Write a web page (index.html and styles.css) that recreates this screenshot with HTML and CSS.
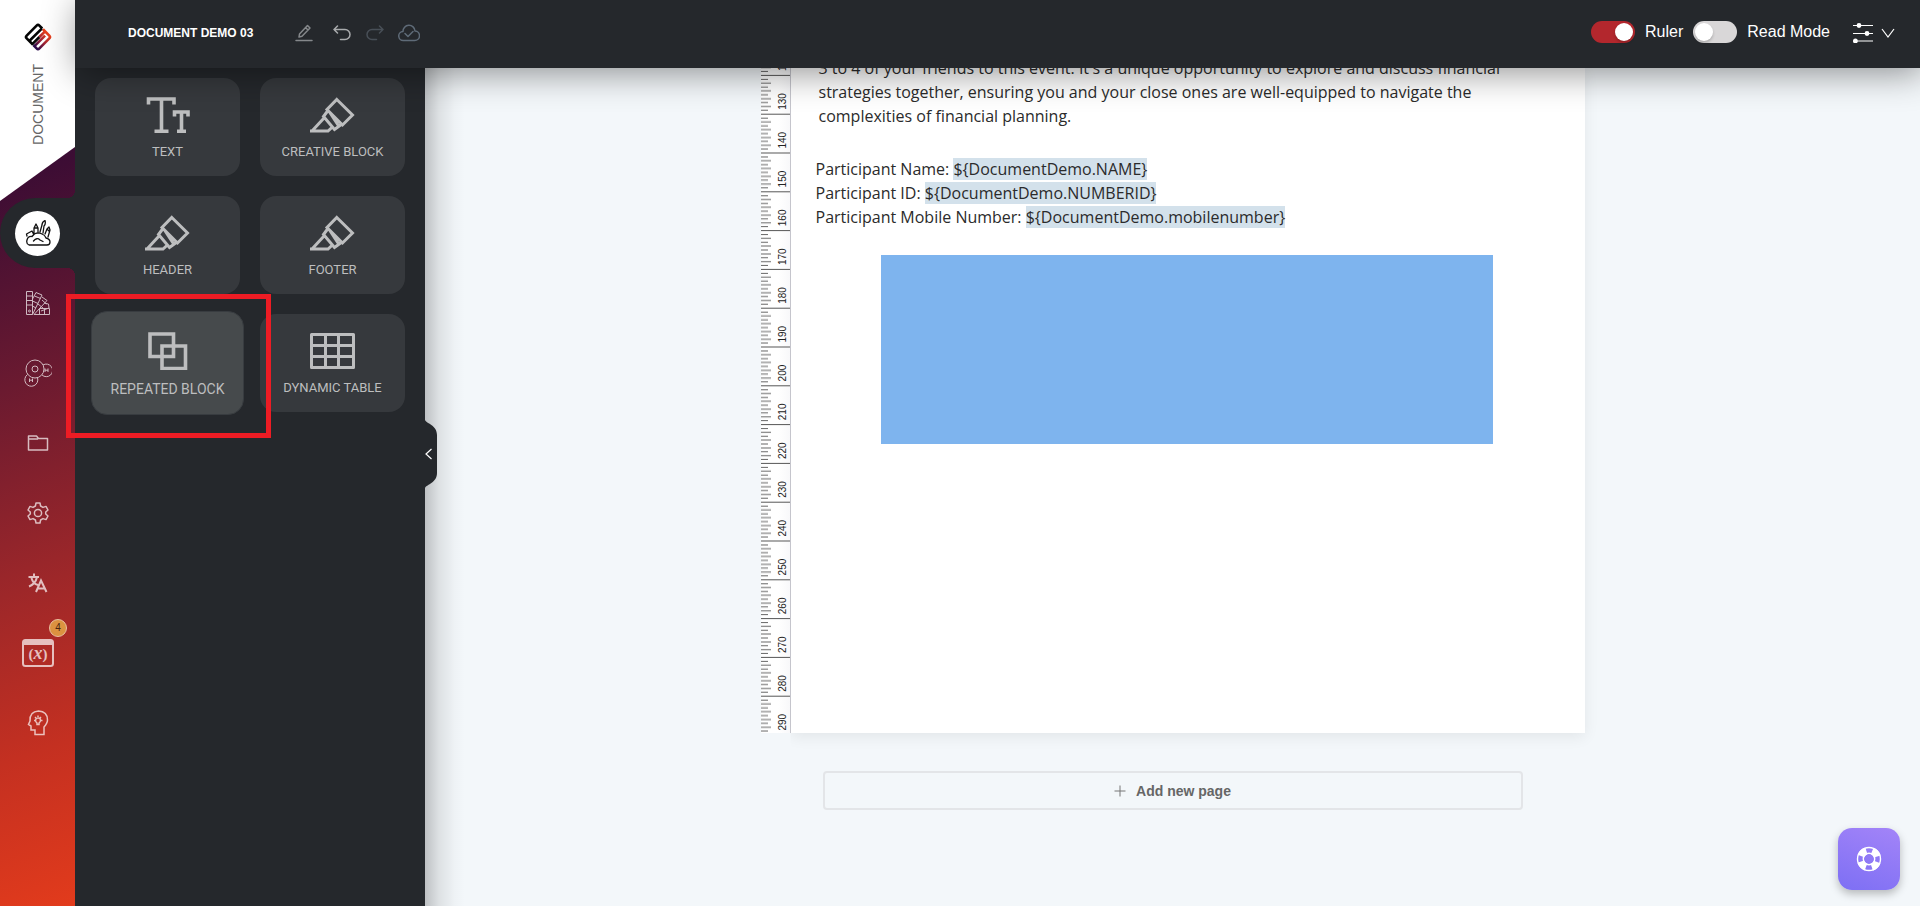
FILE: index.html
```html
<!DOCTYPE html>
<html lang="en">
<head>
<meta charset="utf-8">
<title>Document Demo 03</title>
<link rel="stylesheet" href="styles.css">
</head>
<body>
<svg class="defs" aria-hidden="true">
  <symbol id="marker" viewBox="0 0 45 36">
    <path d="M26.800 2.500 L42.500 18 L32.500 28 L17 12.500 Z M18 13.500 L13.500 19.500 L24.500 32.500 L32 27 M19.500 15 L29 29.500 M14.500 20.500 L2 34 M0 34 H18 L23.500 29" fill="none" stroke="currentColor" stroke-width="3"/>
  </symbol>
</svg>
<div class="app">
  <nav class="rail" aria-label="Document">
    <div class="brand">
      <svg class="logo" viewBox="0 0 30 30" width="30" height="30">
        <defs><linearGradient id="lg" x1="0" y1="0" x2="1" y2="0"><stop offset="0" stop-color="#2a0a4a"/><stop offset=".5" stop-color="#a02335"/><stop offset="1" stop-color="#e8401c"/></linearGradient></defs>
        <g transform="translate(15 15) rotate(-45)" fill="none" stroke-width="2.600" stroke-linejoin="round">
          <path d="M9 -3 V-7 Q9 -9 7 -9 H-7 Q-9 -9 -9 -7 V2" stroke="#050505"/>
          <path d="M-9 -3.300 H9 M-9 1 H1" stroke="#050505"/>
          <path d="M9 -2 V7 Q9 9 7 9 H-7 Q-9 9 -9 7 V2.500" stroke="url(#lg)"/>
          <path d="M-9 4 L6 4.010 M1 1 L9 1.010" stroke="url(#lg)"/>
        </g>
      </svg>
      <span class="brand-name">DOCUMENT</span>
    </div>
    <button class="rail-item active" aria-label="Creative blocks">
      <span class="disc"><svg viewBox="0 0 26 26" width="26" height="26" fill="none" stroke="#111" stroke-width="1.300" stroke-linejoin="round" stroke-linecap="round">
        <path d="M4 25 Q1 24 2 20 Q3 16 7 16.500 Q11 11 17 14 Q20 15 21 18 Q25 19 25 22 Q25 25 22 25 Z M8.500 21 Q12 17 15 20 L18 21.500 M2 16 L1.500 14 L7 11 L8.500 14 M9 13 V8 L11 4 L13 8 V13 M9 8 H13 M15 12 L17 5 Q17 2 20 .5 Q21 4 19 6 L18 13 M20 14 L22 9 L24 7 L25 10 L23 17 M22 9 L24 11"/></svg></span>
    </button>
    <button class="rail-item" aria-label="Swatches">
      <svg viewBox="0 0 26 26" width="26" height="26" class="thin">
        <path d="M1.500 1.500 H7.500 V24.500 H1.500 Z M1.500 6 H7.500 M1.500 10.500 H7.500 M1.500 15 H7.500 M7.500 24.500 L17 5 L11 2.500 L7.500 9 M9.500 6 L15.500 8.500 M7.500 11 L13 13.500 M7.500 16 L11 18 M17 7 L22 10.500 L9 24.500 M13 14 L18 18 M17 10 L21.500 14 M19 13 L23.500 14 L24 18 L16 21 M9 24.500 H24.500 V18.500 H14 M19.500 18.500 V24.500 M14.500 19 V24.500"/><circle cx="4.500" cy="21" r="1"/></svg>
    </button>
    <button class="rail-item" aria-label="Molecule">
      <svg viewBox="0 0 28 28" width="28" height="28" class="thin">
        <circle cx="11" cy="10" r="9"/><circle cx="11" cy="10" r="3"/>
        <path d="M19 6 A6.300 6.300 0 1 1 18 16 M13.500 18.700 A6.500 6.500 0 1 1 3.500 15.500 M5.500 19.500 V23 M8.500 19.500 V23 M5.500 21.200 H8.500 M21 9.500 V13 M24 9.500 V13 M21 11.200 H24"/></svg>
    </button>
    <button class="rail-item" aria-label="Files">
      <svg viewBox="0 0 22 18" width="22" height="18"><path d="M1.500 16 V2 H9.500 L11.500 4.500 H20.500 V16 Z M1.500 5 H11" stroke-linejoin="round"/></svg>
    </button>
    <button class="rail-item" aria-label="Settings">
      <svg viewBox="0 0 24 24" width="24" height="24"><path d="M10 2 H14 L14.600 5 L17 6.400 L20 5.400 L22 9 L19.700 11 V13 L22 15 L20 18.600 L17 17.600 L14.600 19 L14 22 H10 L9.400 19 L7 17.600 L4 18.600 L2 15 L4.300 13 V11 L2 9 L4 5.400 L7 6.400 L9.400 5 Z" stroke-linejoin="round"/><circle cx="12" cy="12" r="3.600"/></svg>
    </button>
    <button class="rail-item" aria-label="Translate">
      <svg viewBox="0 0 22 22" width="22" height="22" class="heavy"><path d="M1.500 5 H12 M7 1.500 V5 M10 5 Q8.500 12 2 14.500 M4.500 6 Q6 12 11 13 M9 20 L14 8.500 L19.500 20 M11 16.500 H18"/></svg>
    </button>
    <button class="rail-item" aria-label="Variables">
      <svg viewBox="0 0 32 28" width="32" height="28"><rect x="1" y="1" width="30" height="26" rx="2.500" stroke-width="2"/><path d="M1 3.500 H31" stroke-width="5"/><text x="16" y="20" text-anchor="middle" class="var">(<tspan class="var-x">x</tspan>)</text></svg>
      <span class="badge">4</span>
    </button>
    <button class="rail-item" aria-label="Ideas">
      <svg viewBox="0 0 22 26" width="22" height="26"><path d="M8 24.500 V20 H4 V16 L1.500 14.500 L3 11 Q2.500 1.500 11.500 1 Q20.500 1.500 20.500 10 Q20.500 13 17 17 V24.500 Z M10 14.500 V13 Q8.500 12 8.500 10 Q9 8 11 8 Q13.500 8 13.500 10 Q13.500 12 12 13 V14.500 Z M11 5.500 V7 M7 10.500 H8 M14 10.500 H15.500 M8 7 L9 8 M14 7 L13 8"/></svg>
    </button>
  </nav>

  <div class="main">
    <header class="topbar">
      <h1 class="doc-title">DOCUMENT DEMO 03</h1>
      <div class="tools">
        <button class="tool pencil" aria-label="Rename"><svg viewBox="0 0 18 18" width="18" height="18"><path d="M1 16.500 H17 M4 13 L4.500 10 L12.500 1.500 L15 4 L7 12.200 Z M10.500 3.500 L13 6"/></svg></button>
        <button class="tool undo" aria-label="Undo"><svg viewBox="0 0 20 16" width="20" height="16"><path d="M5.500 1 L2 4.500 L5.500 8 M2 4.500 H13 A5 5 0 0 1 13 14.500 H8.500"/></svg></button>
        <button class="tool redo" aria-label="Redo"><svg viewBox="0 0 20 16" width="20" height="16"><path d="M14.500 1 L18 4.500 L14.500 8 M18 4.500 H7 A5 5 0 0 0 7 14.500 H11.500"/></svg></button>
        <button class="tool cloud" aria-label="Saved"><svg viewBox="0 0 22 18" width="22" height="18"><path d="M5.500 16.500 A4.500 4.500 0 0 1 5 7.500 A6 6 0 0 1 17 7 A4.700 4.700 0 0 1 16.500 16.500 Z M7 9.500 L10 12.500 L15 7.500"/></svg></button>
      </div>
      <div class="modes">
        <label class="mode"><input type="checkbox" class="switch" checked> Ruler</label>
        <label class="mode"><input type="checkbox" class="switch"> Read Mode</label>
        <button class="view-options" aria-label="View options">
          <svg viewBox="0 0 20 20" width="20" height="20"><path d="M0 2.500 H20 M0 10.500 H20 M0 18 H20"/><g fill="#fff" stroke="none"><circle cx="6" cy="2.500" r="2.400"/><circle cx="14" cy="10.500" r="2.400"/><circle cx="2.400" cy="18" r="2.400"/></g></svg>
          <svg viewBox="0 0 14 12" width="14" height="12"><path d="M1 2 L7 10 L13 2"/></svg>
        </button>
      </div>
    </header>

    <div class="body">
      <aside class="sidebar">
        <div class="blocks">
          <div class="cell"><button class="card">
            <svg viewBox="0 0 45 36" width="45" height="36"><path d="M3.500 7.500 V2 H29 V7.500 M16.500 2 V34 M9.500 34.200 H23.500 M29.500 19.500 V15 H43 V19.500 M36.500 15 V34 M32 34.200 H41" fill="none" stroke="currentColor" stroke-width="3.600"/></svg>
            <span>TEXT</span></button></div>
          <div class="cell"><button class="card"><svg width="45" height="36"><use href="#marker"/></svg><span>CREATIVE BLOCK</span></button></div>
          <div class="cell"><button class="card"><svg width="45" height="36"><use href="#marker"/></svg><span>HEADER</span></button></div>
          <div class="cell"><button class="card"><svg width="45" height="36"><use href="#marker"/></svg><span>FOOTER</span></button></div>
          <div class="cell"><button class="card hovered">
            <svg viewBox="0 0 40 38" width="40" height="38"><path d="M2 2 H25.500 V24.500 H2 Z M14 14 H37.500 V36.500 H14 Z" fill="none" stroke="currentColor" stroke-width="3.600"/></svg>
            <span>REPEATED BLOCK</span></button>
            <div class="highlight"></div></div>
          <div class="cell"><button class="card">
            <svg viewBox="0 0 45 36" width="45" height="36"><path d="M1.500 1.500 H43.500 V34.500 H1.500 Z M1.500 12.500 H43.500 M1.500 23.500 H43.500 M15.500 1.500 V34.500 M28.500 1.500 V34.500" fill="none" stroke="currentColor" stroke-width="3" stroke-linejoin="round"/></svg>
            <span>DYNAMIC TABLE</span></button></div>
        </div>
        <button class="collapse" aria-label="Collapse panel">
          <svg viewBox="0 0 12 68" width="12" height="68"><path d="M0 0 C2 4 12 5 12 15 V53 C12 63 2 64 0 68 Z" fill="#25282c"/><path d="M6.500 29 L1 34 L6.500 39" fill="none" stroke="#fff" stroke-width="1.200"/></svg>
        </button>
      </aside>

      <main class="workspace">
        <div class="spread">
          <div class="ruler">
            <svg viewBox="0 0 29 665" width="29" height="665">
              <defs>
                <pattern id="ticks" patternUnits="userSpaceOnUse" x="0" y="6.900" width="29" height="38.800">
                  <path d="M0 .5 H29" stroke="#555"/>
                  <path d="M0 4.400 H7 M0 8.300 H10 M0 12.100 H7 M0 16 H10 M0 19.900 H7 M0 23.800 H10 M0 27.700 H7 M0 31.500 H10 M0 35.400 H7" stroke="#666"/>
                </pattern>
              </defs>
              <rect width="29" height="665" fill="url(#ticks)"/>
              <g id="numbers" class="numbers"></g>
            </svg>
          </div>
          <article class="sheet">
            <p class="intro">3 to 4 of your friends to this event. It's a unique opportunity to explore and discuss financial strategies together, ensuring you and your close ones are well-equipped to navigate the complexities of financial planning.</p>
            <p class="fields">Participant Name: <mark>${DocumentDemo.NAME}</mark><br>Participant ID: <mark>${DocumentDemo.NUMBERID}</mark><br>Participant Mobile Number: <mark>${DocumentDemo.mobilenumber}</mark></p>
            <div class="block"></div>
          </article>
        </div>
        <button class="add-page"><svg viewBox="0 0 12 12" width="12" height="12"><path d="M6 .5 V11.500 M.5 6 H11.500" stroke="#777"/></svg>Add new page</button>
      </main>
    </div>
  </div>
  <button class="help" aria-label="Help">
    <svg viewBox="0 0 26 26" width="26" height="26" fill="none" stroke="#fff"><circle cx="13" cy="13" r="11.500" stroke-width="1.400"/><circle cx="13" cy="13" r="5.700" stroke-width="1.400"/><circle cx="13" cy="13" r="8.600" stroke-width="7" stroke-dasharray="7.600 5.900" stroke-dashoffset="-3"/></svg>
  </button>
</div>
<script src="ruler.js"></script>
</body>
</html>
```
FILE: ruler.js
```js
// Millimetre labels, read bottom to top, one before each major tick.
const group = document.getElementById("numbers");
for (let i = 0; i < 18; i++) {
  const text = document.createElementNS("http://www.w3.org/2000/svg", "text");
  const y = 3 + i * 38.8;
  text.setAttribute("transform", `translate(25 ${y}) rotate(-90)`);
  text.textContent = 120 + i * 10;
  group.appendChild(text);
}
```
FILE: styles.css
```css
* { box-sizing: border-box; }
body { margin: 0; font-family: "Liberation Sans", Arial, sans-serif; }
button { border: 0; padding: 0; background: none; font: inherit; color: inherit; cursor: pointer; }
svg { display: block; flex: none; }
.defs { position: absolute; width: 0; height: 0; }

.app { display: flex; height: 100vh; overflow: hidden; position: relative; }

/* Left rail */
.rail {
  width: 75px; flex: none; position: relative; z-index: 2;
  background: linear-gradient(160deg, #2b0b36 8%, #3d0d34 20%, #6b1a30 42%, #99262a 62%, #c43021 82%, #e23b1c 100%);
}
.brand {
  height: 201px; margin-bottom: -3px; padding-top: 22px; display: flex; flex-direction: column; align-items: center; gap: 12px;
  background: #fff; clip-path: polygon(0 0, 100% 0, 100% 147px, 0 201px);
}
.brand-name { writing-mode: vertical-rl; transform: rotate(180deg); font-size: 14px; line-height: 16px; color: #666; }
.rail-item { position: relative; display: flex; width: 75px; height: 70px; align-items: center; justify-content: center; }
.rail-item > svg { fill: none; stroke: #fff; stroke-width: 1.5px; opacity: .7; }
.rail-item > svg.thin { stroke-width: 1px; }
.rail-item > svg.heavy { stroke-width: 2px; }
.rail-item.active { background: #25282c; border-radius: 35px 0 0 35px; }
.rail-item.active::before, .rail-item.active::after {
  content: ""; position: absolute; right: 0; width: 8px; height: 8px;
}
.rail-item.active::before { bottom: 100%; background: radial-gradient(circle at 0 0, transparent 8px, #25282c 8px); }
.rail-item.active::after { top: 100%; background: radial-gradient(circle at 0 100%, transparent 8px, #25282c 8px); }
.disc { width: 45px; height: 45px; border-radius: 50%; background: #fff; display: flex; align-items: center; justify-content: center; }
.var { font: bold 15px "Liberation Serif", serif; fill: #fff; stroke: none; }
.var-x { font-style: italic; font-size: 18px; }
.badge {
  position: absolute; left: 49px; top: 1px; width: 18px; height: 18px; border-radius: 50%;
  background: #dc9240; border: 1px solid #e9bfa0; color: #4a2410; font-size: 10px; line-height: 16px; text-align: center;
}

/* Top bar */
.main { flex: 1; min-width: 0; display: flex; flex-direction: column; }
.topbar {
  height: 68px; flex: none; position: relative; z-index: 4; display: flex; align-items: center;
  padding: 0 25px 2px 53px; background: #25282c; color: #fff; box-shadow: 4px 4px 36px rgba(0, 0, 0, .45);
}
.doc-title { margin: 0; font-size: 12px; line-height: 16px; font-weight: 700; }
.tools { display: flex; align-items: center; gap: 13px; margin-left: 42px; }
.tool svg { fill: none; stroke-width: 1.5px; stroke-linecap: round; stroke-linejoin: round; }
.pencil { stroke: #85888b; margin-right: 6px; }
.undo { stroke: #a9abad; }
.redo { stroke: #484f57; }
.cloud { stroke: #5f6b78; }
.modes { display: flex; align-items: center; gap: 10px; margin-left: auto; font-size: 16px; line-height: 20px; }
.mode { display: flex; align-items: center; gap: 10px; margin-bottom: 2px; }
.switch {
  appearance: none; margin: 0; width: 44px; height: 22px; border-radius: 11px; background: #d9d7d8;
  padding: 2px; display: flex;
}
.switch::before { content: ""; width: 18px; height: 18px; border-radius: 50%; background: #fff; box-shadow: 0 2px 3px rgba(0, 0, 0, .2); }
.switch:checked { background: #b3272d; justify-content: flex-end; }
.view-options { display: flex; align-items: center; gap: 8px; margin-left: 13px; }
.view-options svg { fill: none; stroke: #fff; stroke-width: 1.2px; }

/* Block palette */
.body { flex: 1; min-height: 0; display: flex; }
.sidebar {
  width: 350px; flex: none; position: relative; z-index: 3; padding: 10px 20px; background: #25282c;
}
.sidebar::before {
  content: ""; position: absolute; left: 100%; top: 0; bottom: 0; width: 40px;
  background: linear-gradient(90deg, rgba(0, 0, 0, .22), rgba(0, 0, 0, .09) 35%, rgba(0, 0, 0, .02) 75%, transparent);
}
.blocks { display: grid; grid-template-columns: 1fr 1fr; gap: 20px; }
.cell { position: relative; height: 98px; display: flex; }
.card {
  flex: 1; display: flex; flex-direction: column; align-items: center; gap: 11px; padding-top: 19px;
  border-radius: 16px; background: #36393d; color: #bdbebf; font: 13px/16px Roboto, sans-serif;
}
.card.hovered { margin: -3px -4px; padding-top: 20px; background: #464a4c; border: 1px solid #383c40; font-size: 14px; }
.highlight { position: absolute; left: -29px; top: -20px; width: 205px; height: 144px; border: 5px solid #ed1c24; z-index: 2; pointer-events: none; }
.collapse { position: absolute; left: 100%; top: 352px; }

/* Canvas */
.workspace { flex: 1; min-width: 0; background: #f3f7fa; display: flex; flex-direction: column; align-items: center; overflow: hidden; }
.spread { display: flex; flex: none; width: 824px; }
.ruler { width: 30px; flex: none; background: linear-gradient(90deg, #fff 60%, #f8f8fa); border-right: 1px solid #c9c9d0; }
.numbers { font: 10px "Liberation Sans", Arial, sans-serif; fill: #222; }
.sheet { flex: 1; min-width: 0; min-height: 665px; background: #fff; box-shadow: 0 4px 14px rgba(0, 0, 0, .07); clip-path: inset(0 -20px -20px 0); font: 16px/24px "Open Sans", sans-serif; color: #2b2b2b; }
.sheet p { margin: 0; }
.sheet .intro { margin-top: -12px; padding: 0 70px 0 28px; }
.sheet .fields { margin-top: 29px; padding-left: 25px; }
.fields mark { background: #d3e1eb; color: inherit; }
.block { width: 612px; height: 189px; margin: 26px 0 0 90px; background: #7eb4ee; }
.add-page {
  display: flex; align-items: center; justify-content: center; gap: 10px; width: 700px; height: 39px; flex: none;
  margin-top: 38px; border: 2px solid #e3e5e8; border-radius: 4px; color: #666; font-size: 14px; line-height: 16px; font-weight: 700;
}

.help {
  position: absolute; right: 20px; bottom: 16px; z-index: 5; width: 62px; height: 62px; border-radius: 14px;
  display: flex; align-items: center; justify-content: center;
  background: linear-gradient(20deg, #7d6ff4, #a384f8); box-shadow: 0 4px 8px rgba(0, 0, 0, .25);
}
```
